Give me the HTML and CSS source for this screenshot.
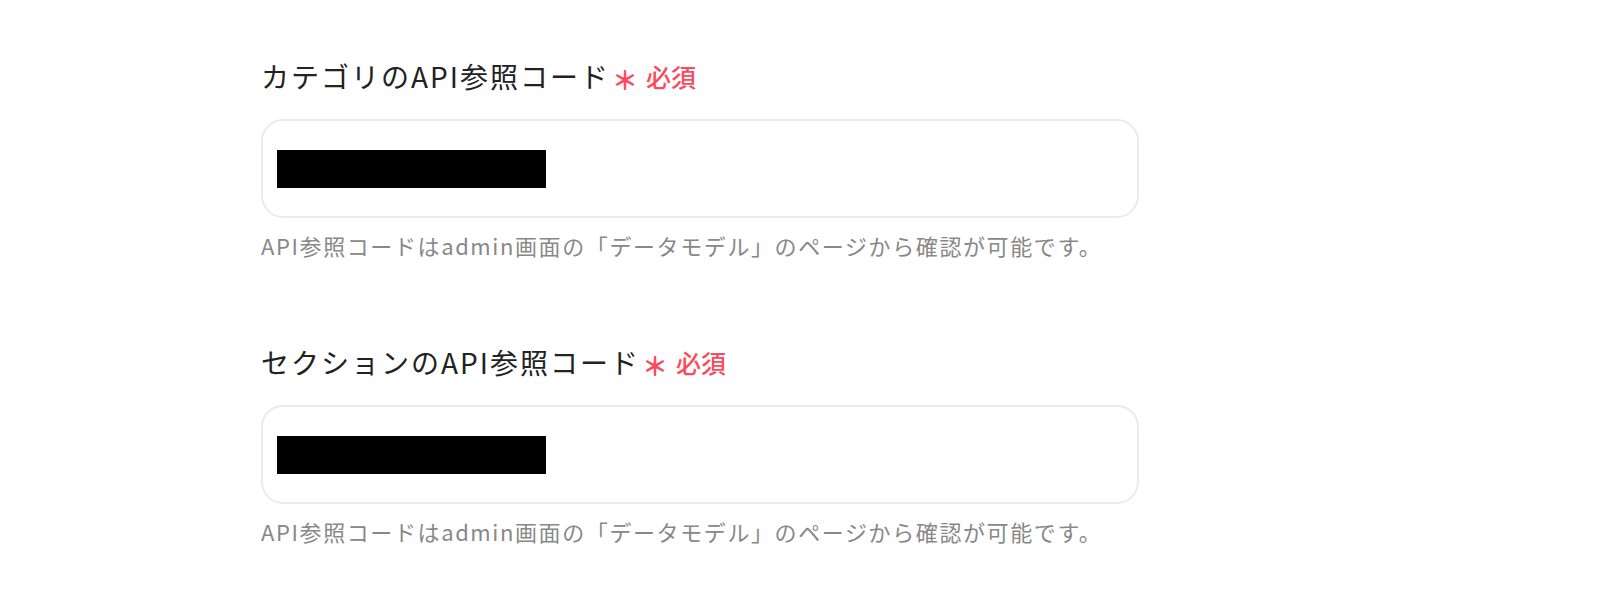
FILE: index.html
```html
<!DOCTYPE html>
<html lang="ja">
<head>
<meta charset="UTF-8">
<meta name="viewport" content="width=device-width, initial-scale=1.0">
<title>API参照コード設定</title>
<link rel="stylesheet" href="styles.css">
</head>
<body>

<div class="form">
    <div class="field">
        <div class="label">カテゴリのAPI参照コード<span class="mark">＊</span><span class="required">必須</span></div>
        <div class="input"><span class="masked"></span></div>
        <div class="help">API参照コードはadmin画面の「データモデル」のページから確認が可能です。</div>
    </div>

    <div class="field">
        <div class="label">セクションのAPI参照コード<span class="mark">＊</span><span class="required">必須</span></div>
        <div class="input"><span class="masked"></span></div>
        <div class="help">API参照コードはadmin画面の「データモデル」のページから確認が可能です。</div>
    </div>
</div>

</body>
</html>
```

FILE: styles.css
```css
body {
    font-family: "Noto Sans CJK JP", "Noto Sans", sans-serif;
    background-color: #fff;
    margin: 0;
    padding: 0;
}
.form {
    padding: 56px 0 0 261px;
    display: flex;
    flex-direction: column;
    gap: 81px;
}
.field {
    width: 878px;
}
.label {
    font-size: 28px;
    line-height: 40px;
    font-weight: 400;
    letter-spacing: 2px;
    color: #222;
    display: flex;
    align-items: center;
}
.mark {
    color: #fa4b5e;
    font-size: 26px;
    font-weight: 700;
    margin-left: 2px;
    position: relative;
    top: 3px;
}
.required {
    color: #fa4b5e;
    font-size: 25px;
    font-weight: 500;
    letter-spacing: 0;
    margin-left: 6px;
}
.input {
    margin-top: 23px;
    height: 95px;
    border: 2px solid #ebebeb;
    border-radius: 22px;
    display: flex;
    align-items: center;
    padding-left: 14px;
}
.masked {
    display: block;
    width: 269px;
    height: 38px;
    background-color: #000;
}
.help {
    margin-top: 11px;
    font-size: 22px;
    line-height: 32px;
    letter-spacing: 1.6px;
    color: #888;
}
```
